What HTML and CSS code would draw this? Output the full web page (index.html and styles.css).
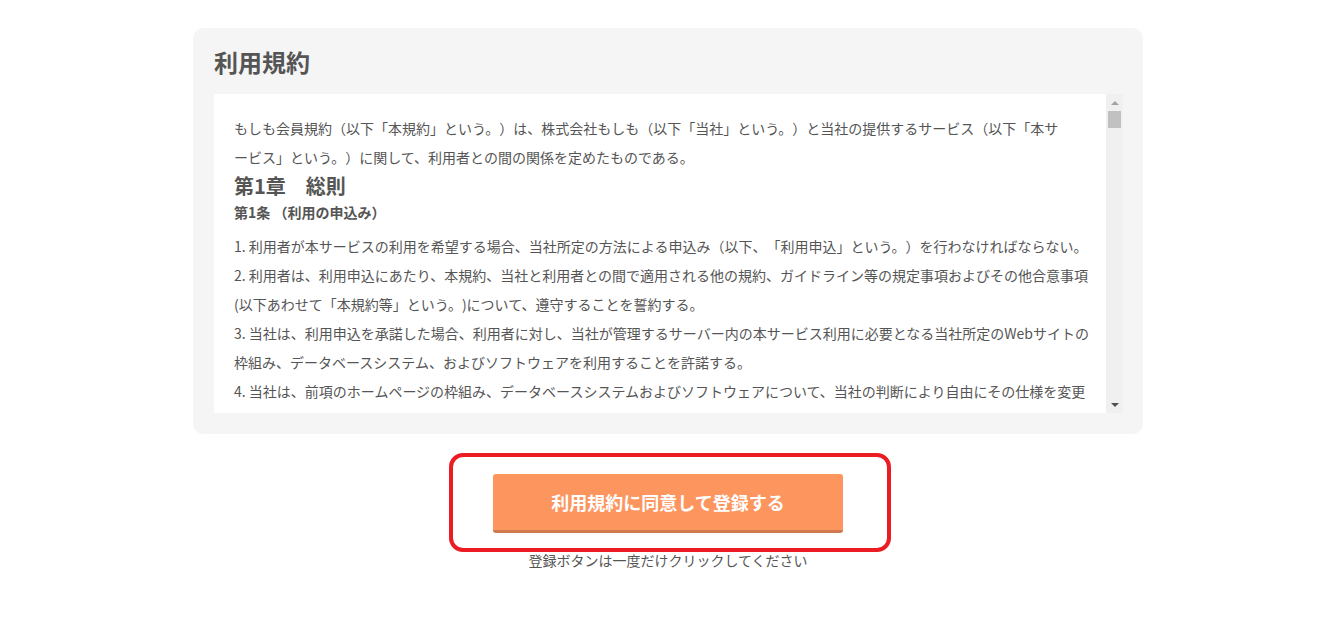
FILE: index.html
```html
<!DOCTYPE html>
<html lang="ja">
<head>
  <meta charset="UTF-8" />
  <meta name="viewport" content="width=device-width, initial-scale=1.0"/>
  <title>利用規約</title>
  <link rel="stylesheet" href="styles.css">
</head>
<body>

  <div class="page">

    <!-- Terms card -->
    <div class="terms-card">
      <h2>利用規約</h2>
      <div class="terms-box">
        <div class="terms-text">
          <p>もしも会員規約（以下「本規約」という。）は、株式会社もしも（以下「当社」という。）と当社の提供するサービス（以下「本サ<br>ービス」という。）に関して、利用者との間の関係を定めたものである。</p>

          <h3>第1章　総則</h3>
          <h4>第1条 （利用の申込み）</h4>
          <p>1. 利用者が本サービスの利用を希望する場合、当社所定の方法による申込み（以下、「利用申込」という。）を行わなければならない。</p>
          <p>2. 利用者は、利用申込にあたり、本規約、当社と利用者との間で適用される他の規約、ガイドライン等の規定事項およびその他合意事項(以下あわせて「本規約等」という。)について、遵守することを誓約する。</p>
          <p>3. 当社は、利用申込を承諾した場合、利用者に対し、当社が管理するサーバー内の本サービス利用に必要となる当社所定のWebサイトの枠組み、データベースシステム、およびソフトウェアを利用することを許諾する。</p>
          <p>4. 当社は、前項のホームページの枠組み、データベースシステムおよびソフトウェアについて、当社の判断により自由にその仕様を変更できるものとし、利用者はこれに異議を述べないものとする。</p>

          <h4 class="article">第2条 （会員登録）</h4>
          <p>1. 当社は、利用申込を行った者について、当社所定の審査を行い、承諾した者を会員として登録する。</p>
          <p>2. 当社は、利用申込を行った者が次の各号のいずれかに該当する場合、その利用申込を承諾しないことがある。</p>
          <p>(1) 利用申込の内容に虚偽、誤記または記入漏れがあった場合</p>
          <p>(2) 過去に本規約等に違反したことにより、会員資格を取り消されたことがある場合</p>
          <p>(3) その他、当社が会員として不適当と判断した場合</p>

          <h4 class="article">第3条 （登録情報の変更）</h4>
          <p>1. 会員は、登録情報に変更が生じた場合、当社所定の方法により、速やかに変更の届出を行うものとする。</p>
          <p>2. 前項の届出を怠ったことにより会員が不利益を被った場合でも、当社は一切の責任を負わないものとする。</p>

          <h4 class="article">第4条 （ID及びパスワードの管理）</h4>
          <p>1. 会員は、自己の責任においてID及びパスワードを管理するものとし、第三者に利用させ、または貸与、譲渡、売買等をしてはならない。</p>
          <p>2. ID及びパスワードの管理不十分、使用上の過誤、第三者の使用等による損害の責任は会員が負うものとする。</p>

          <h3 class="chapter">第2章　サービスの利用</h3>
          <h4>第5条 （サービスの内容）</h4>
          <p>1. 当社は、会員に対し、当社が別途定める内容の本サービスを提供する。</p>
          <p>2. 当社は、会員への事前の通知なく、本サービスの内容を変更、追加または廃止することができる。</p>

          <h4 class="article">第6条 （禁止事項）</h4>
          <p>会員は、本サービスの利用にあたり、次の各号に該当する行為を行ってはならない。</p>
          <p>(1) 法令または公序良俗に違反する行為</p>
          <p>(2) 当社または第三者の著作権、商標権その他の知的財産権を侵害する行為</p>
          <p>(3) 当社または第三者の名誉、信用を毀損する行為</p>
          <p>(4) 本サービスの運営を妨げる行為</p>
          <p>(5) その他、当社が不適切と判断する行為</p>

          <h4 class="article">第7条 （サービスの停止）</h4>
          <p>当社は、システムの保守点検、天災地変その他やむを得ない事由がある場合、会員に事前に通知することなく本サービスの全部または一部を停止することができる。</p>

          <h3 class="chapter">第3章　雑則</h3>
          <h4>第8条 （免責）</h4>
          <p>当社は、本サービスの利用により会員に生じた損害について、当社の故意または重過失による場合を除き、一切の責任を負わないものとする。</p>

          <h4 class="article">第9条 （規約の変更）</h4>
          <p>当社は、会員の承諾を得ることなく本規約を変更できるものとし、変更後の規約は当社のWebサイトに掲示した時点から効力を生じるものとする。</p>

          <h4 class="article">第10条 （準拠法及び管轄裁判所）</h4>
          <p>本規約の準拠法は日本法とし、本規約に関する一切の紛争については、東京地方裁判所を第一審の専属的合意管轄裁判所とする。</p>

          <p>附則　本規約は公開日より施行する。</p>
        </div>

        <div class="scrollbar">
          <div class="sb-btn"><span class="arrow-up"></span></div>
          <div class="sb-track"><div class="sb-thumb"></div></div>
          <div class="sb-btn"><span class="arrow-down"></span></div>
        </div>
      </div>
    </div>

    <!-- Register button -->
    <div class="submit-area">
      <div class="btn-frame">
        <button class="submit-btn">利用規約に同意して登録する</button>
      </div>
      <p class="submit-note">登録ボタンは一度だけクリックしてください</p>
    </div>

  </div>

</body>
</html>
```

FILE: styles.css
```css
:root {
  --text: #555555;
  --card-bg: #f5f5f5;
  --orange: #fd955f;
  --orange-dark: #cf7a4e;
  --red: #ec1c24;
}

body {
  margin: 0;
  font-family: "Noto Sans CJK JP", "Noto Sans", sans-serif;
  color: var(--text);
  background: #ffffff;
  text-spacing-trim: space-all;
}

.page {
  padding: 28px 0 40px 5px;
}

/* Terms card */
.terms-card {
  width: 950px;
  box-sizing: border-box;
  margin: 0 auto;
  padding: 16px 20px 21px 21px;
  background: var(--card-bg);
  border-radius: 10px;
}

.terms-card h2 {
  margin: 0 0 14px;
  font-size: 24px;
  line-height: 36px;
  font-weight: bold;
}

.terms-box {
  display: flex;
  height: 319px;
  background: #ffffff;
}

.terms-text {
  flex: 1;
  overflow-y: auto;
  scrollbar-width: none;
  padding: 20px 10px 20px 20px;
  font-size: 14px;
  line-height: 29px;
}

.terms-text p {
  margin: 0;
}

.terms-text h3 {
  margin: 0;
  font-size: 20px;
  line-height: 28px;
  font-weight: bold;
}

.terms-text h4 {
  margin: 0 0 8px;
  font-size: 14px;
  line-height: 24px;
  font-weight: bold;
}

.terms-text .article,
.terms-text .chapter {
  margin-top: 10px;
}

/* Fake scrollbar */
.scrollbar {
  width: 17px;
  display: flex;
  flex-direction: column;
  background: #f0f0f0;
}

.sb-btn {
  height: 17px;
  display: flex;
  align-items: center;
  justify-content: center;
}

.arrow-up {
  border-left: 4px solid transparent;
  border-right: 4px solid transparent;
  border-bottom: 4px solid #a3a3a3;
}

.arrow-down {
  border-left: 4px solid transparent;
  border-right: 4px solid transparent;
  border-top: 4px solid #505050;
}

.sb-track {
  flex: 1;
  padding: 0 2px;
}

.sb-thumb {
  height: 17px;
  background: #c1c1c1;
}

/* Register button */
.submit-area {
  display: flex;
  flex-direction: column;
  align-items: center;
  margin-top: 40px;
}

.btn-frame {
  position: relative;
}

/* red highlight frame around the button */
.btn-frame::before {
  content: "";
  position: absolute;
  top: -21px;
  bottom: -19px;
  left: -44px;
  right: -48px;
  border: 4px solid var(--red);
  border-radius: 14px;
}

.submit-btn {
  display: block;
  width: 350px;
  height: 59px;
  padding: 0;
  border: none;
  border-bottom: 3px solid var(--orange-dark);
  border-radius: 3px;
  background: var(--orange);
  color: #ffffff;
  font-family: inherit;
  font-size: 18px;
  font-weight: bold;
  cursor: pointer;
}

.submit-note {
  margin: 16px 0 0;
  font-size: 14px;
  line-height: 22px;
}
```
